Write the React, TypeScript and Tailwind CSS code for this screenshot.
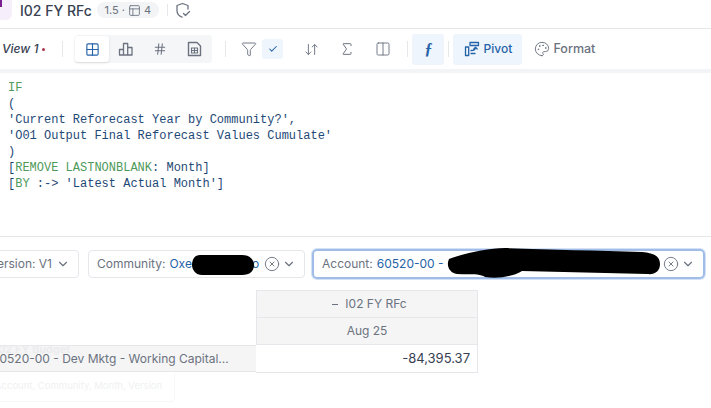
import { ChevronDown, CircleX, Hash, Sigma, Filter, Check, ArrowDownUp, Palette, Columns2, Grid2x2, PanelsTopLeft } from "lucide-react";

const inter = { fontFamily: "Inter, sans-serif" };

function ToolIcon({ children, active }: { children: React.ReactNode; active?: boolean }) {
  return (
    <div className={`flex h-[26px] w-[34px] items-center justify-center rounded-[3px] ${active ? "bg-white text-[#2563a8] shadow-sm" : "text-[#6b7280]"}`}>
      {children}
    </div>
  );
}

function BarsIcon() {
  return (
    <svg width="16" height="16" viewBox="0 0 16 16" fill="none" stroke="currentColor" strokeWidth="1.3" strokeLinejoin="round">
      <path d="M1.5 14V8.5h4V14M5.5 14V2.5h4.2V14M9.7 14V6.5h4.3V14M1 14h13.5" />
    </svg>
  );
}

function CalcIcon() {
  return (
    <svg width="15" height="16" viewBox="0 0 15 16" fill="none" stroke="currentColor" strokeWidth="1.4" strokeLinejoin="round">
      <path d="M1.5 1.5h8.5l3.5 3.5v9.5h-12z" />
      <path d="M4.5 7h6v5h-6zM7.5 7v5M4.5 9.5h6" strokeWidth="1.1" />
    </svg>
  );
}

function PivotIcon() {
  return (
    <svg width="16" height="16" viewBox="0 0 16 16" fill="none" stroke="currentColor" strokeWidth="1.3" strokeLinejoin="round" strokeLinecap="round">
      <path d="M1.5 6h3.2v8.5H1.5zM6 1.5h8.5v3H6z" />
      <path d="M7 9.5c3 0 4.5-.8 4.5-3M9.8 8l1.7-1.7L13.2 8M7 12.5h4" />
    </svg>
  );
}

function ShieldIcon() {
  return (
    <svg width="16" height="17" viewBox="0 0 16 17" fill="none" stroke="currentColor" strokeWidth="1.3" strokeLinejoin="round" strokeLinecap="round">
      <path d="M7 15.2C4 14 2 12 2 8.5V3.5L7.5 1.5L13 3.5V7" />
      <path d="M8.5 11.5l2 2 4-4" />
    </svg>
  );
}

function Blob({ width, height, d }: { width: number; height: number; d: string }) {
  return (
    <svg width={width} height={height} viewBox={`0 0 ${width} ${height}`} className="absolute left-0 top-0">
      <path d={d} fill="#000" />
    </svg>
  );
}

export default function App() {
  return (
    <div className="flex h-[408px] w-[711px] flex-col overflow-hidden bg-white" style={inter}>
      {/* title bar */}
      <div className="flex h-[29px] shrink-0 items-center border-b border-[#e5e7eb] pb-[8px]">
        <div className="h-[20px] w-[12px] self-start rounded-br-[6px] bg-[#f6eefa]">
          <div className="h-[7px] w-[2px] bg-[#7a1f8f]" />
        </div>
        <span className="ml-[8px] text-[14px] font-medium text-[#374151]">I02 FY RFc</span>
        <div className="ml-[5px] flex h-[16px] w-[62px] items-center justify-center gap-[3px] rounded-full bg-[#f3f4f6] text-[11px] text-[#6b7280]">
          <span>1.5</span>
          <span>·</span>
          <PanelsTopLeft size={13} strokeWidth={1.6} />
          <span>4</span>
        </div>
        <div className="ml-[8px] mr-[7px] h-[12px] w-px bg-[#e5e7eb]" />
        <div className="text-[#6b7280]">
          <ShieldIcon />
        </div>
      </div>

      {/* toolbar */}
      <div className="flex h-[40px] shrink-0 items-center">
        <span className="ml-[2px] text-[12px] font-medium italic text-[#374151]">View 1</span>
        <span className="ml-[4px] h-[3px] w-[3px] rounded-full bg-[#a8324a]" />
        <div className="ml-[17px] mr-[12px] h-[16px] w-px bg-[#e5e7eb]" />
        <div className="flex h-[28px] items-center rounded-[3px] bg-[#f5f6f7] pr-[1px]">
          <ToolIcon active>
            <Grid2x2 size={15} strokeWidth={1.8} />
          </ToolIcon>
          <ToolIcon><BarsIcon /></ToolIcon>
          <ToolIcon><Hash size={14} strokeWidth={1.8} /></ToolIcon>
          <ToolIcon><CalcIcon /></ToolIcon>
        </div>
        <div className="ml-[13px] mr-[15px] h-[16px] w-px bg-[#e5e7eb]" />
        <Filter size={16} strokeWidth={1.4} className="text-[#6b7280]" />
        <div className="ml-[5px] flex h-[20px] w-[21px] items-center justify-center rounded-[3px] bg-[#eff5fc]">
          <Check size={10} strokeWidth={2.5} className="text-[#2563a8]" />
        </div>
        <ArrowDownUp size={15} strokeWidth={1.5} className="ml-[21px] text-[#6b7280]" />
        <Sigma size={16} strokeWidth={1.5} className="ml-[20px] text-[#6b7280]" />
        <Columns2 size={16} strokeWidth={1.4} className="ml-[20px] text-[#6b7280]" />
        <div className="ml-[16px] h-[16px] w-px bg-[#e5e7eb]" />
        <div className="ml-[4px] flex h-[31px] w-[32px] items-center justify-center rounded-[3px] bg-[#eff5fc] text-[16px] font-semibold italic text-[#2563a8]" style={{ fontFamily: "'Liberation Serif', serif" }}>
          ƒ
        </div>
        <div className="ml-[4px] h-[16px] w-px bg-[#e5e7eb]" />
        <div className="ml-[4px] flex h-[31px] w-[69px] items-center justify-center gap-[4px] rounded-[3px] bg-[#eff5fc] text-[12px] font-medium text-[#2563a8]">
          <PivotIcon />
          Pivot
        </div>
        <Palette size={16} strokeWidth={1.4} className="ml-[12px] text-[#6b7280]" />
        <span className="ml-[3px] text-[12.5px] font-medium text-[#6b7280]">Format</span>
      </div>

      <div className="h-[4px] shrink-0 bg-[#f3f4f6]" />

      {/* formula editor */}
      <pre className="h-[164px] shrink-0 border-b border-[#e5e7eb] pl-[8px] pt-[7px] text-[12px] leading-[16px] text-[#1e4976]" style={{ fontFamily: "'Liberation Mono', monospace" }}>
        <span className="text-[#4f9a5b]">IF</span>
        {"\n(\n'Current Reforecast Year by Community?',\n'O01 Output Final Reforecast Values Cumulate'\n)\n["}
        <span className="text-[#4f9a5b]">REMOVE LASTNONBLANK</span>
        {": Month]\n["}
        <span className="text-[#4f9a5b]">BY</span>
        {" :-> 'Latest Actual Month']"}
      </pre>

      {/* filters */}
      <div className="-ml-[30px] mt-[12px] flex shrink-0 items-center text-[12px]">
        <div className="flex h-[28px] w-[109px] items-center justify-end rounded-[4px] border border-[#e5e7eb] pr-[8px] text-[#6b7280]">
          Version: V1
          <ChevronDown size={14} className="ml-[4px]" />
        </div>
        <div className="relative ml-[9px] flex h-[28px] w-[217px] items-center rounded-[4px] border border-[#e5e7eb] pl-[8px] text-[#6b7280]">
          Community:
          <span className="ml-[4px] text-[#2563a8]">Oxe</span>
          <span className="ml-[60px] text-[#2563a8]">o</span>
          <CircleX size={16} strokeWidth={1.4} className="ml-[5px]" />
          <ChevronDown size={14} className="ml-[2px]" />
          <div className="absolute left-[103px] top-[4px]">
            <Blob width={62} height={20} d="M8 0H50C58 0 62 5 62 10C62 16 58 20 50 20H10C4 20 0 15 0 10C0 4 3 0 8 0Z" />
          </div>
        </div>
        <div className="relative ml-[7px] flex h-[30px] w-[393px] items-center rounded-[5px] border-2 border-[#9fbde8] pl-[8px] text-[#6b7280] ring-1 ring-[#d5e2f5]">
          Account:
          <span className="ml-[4px] text-[#2563a8]">60520-00 -</span>
          <CircleX size={16} strokeWidth={1.4} className="ml-auto" />
          <ChevronDown size={14} className="ml-[2px] mr-[8px]" />
          <div className="absolute left-[133px] top-[-4px]">
            <Blob width={214} height={32} d="M2 12C15 7 40 1 58 1C100 3 150 3 195 5C208 6 213 10 213 17C213 24 208 28 200 27L75 24C65 30 50 32 38 30C32 26 20 28 10 27C2 26 -1 18 2 12Z" />
          </div>
        </div>
      </div>

      {/* pivot table */}
      <div className="relative mt-[11px] flex flex-col text-[12px]">
        <div className="ml-[256px] flex h-[27px] w-[222px] items-center justify-center gap-[7px] border border-b-0 border-[#e5e7eb] bg-[#f5f5f5] pl-[5px] text-[#6b7280]">
          <span className="h-px w-[6px] bg-[#6b7280]" />
          I02 FY RFc
        </div>
        <div className="ml-[256px] flex h-[28px] w-[222px] items-center justify-center border border-[#e5e7eb] bg-[#f5f5f5] text-[#6b7280]">
          Aug 25
        </div>
        <div className="flex h-[28px]">
          <div className="-ml-[8px] flex h-[27px] w-[264px] items-center whitespace-nowrap border-b border-t border-[#e5e7eb] bg-[#f5f5f5] text-[#6b7280]">
            60520-00 - Dev Mktg - Working Capital...
          </div>
          <div className="flex w-[222px] items-center justify-end border-b border-r border-[#e5e7eb] pr-[7px] text-[13px] text-[#374151]">
            -84,395.37
          </div>
        </div>
        <div className="h-[29px] w-[175px] overflow-hidden whitespace-nowrap rounded-br-[4px] border-b border-r border-[#f7f7f8] pt-[6px] text-[9.5px] text-[#f0f1f2]">
          <span className="-ml-[5px] block">Account, Community, Month, Version</span>
        </div>
        {/* ghost of a drag preview behind the row */}
        <div className="absolute -left-[5px] top-[51px] text-[11px] font-semibold text-[#ebebed]">I02 FY Budget</div>
      </div>
    </div>
  );
}
